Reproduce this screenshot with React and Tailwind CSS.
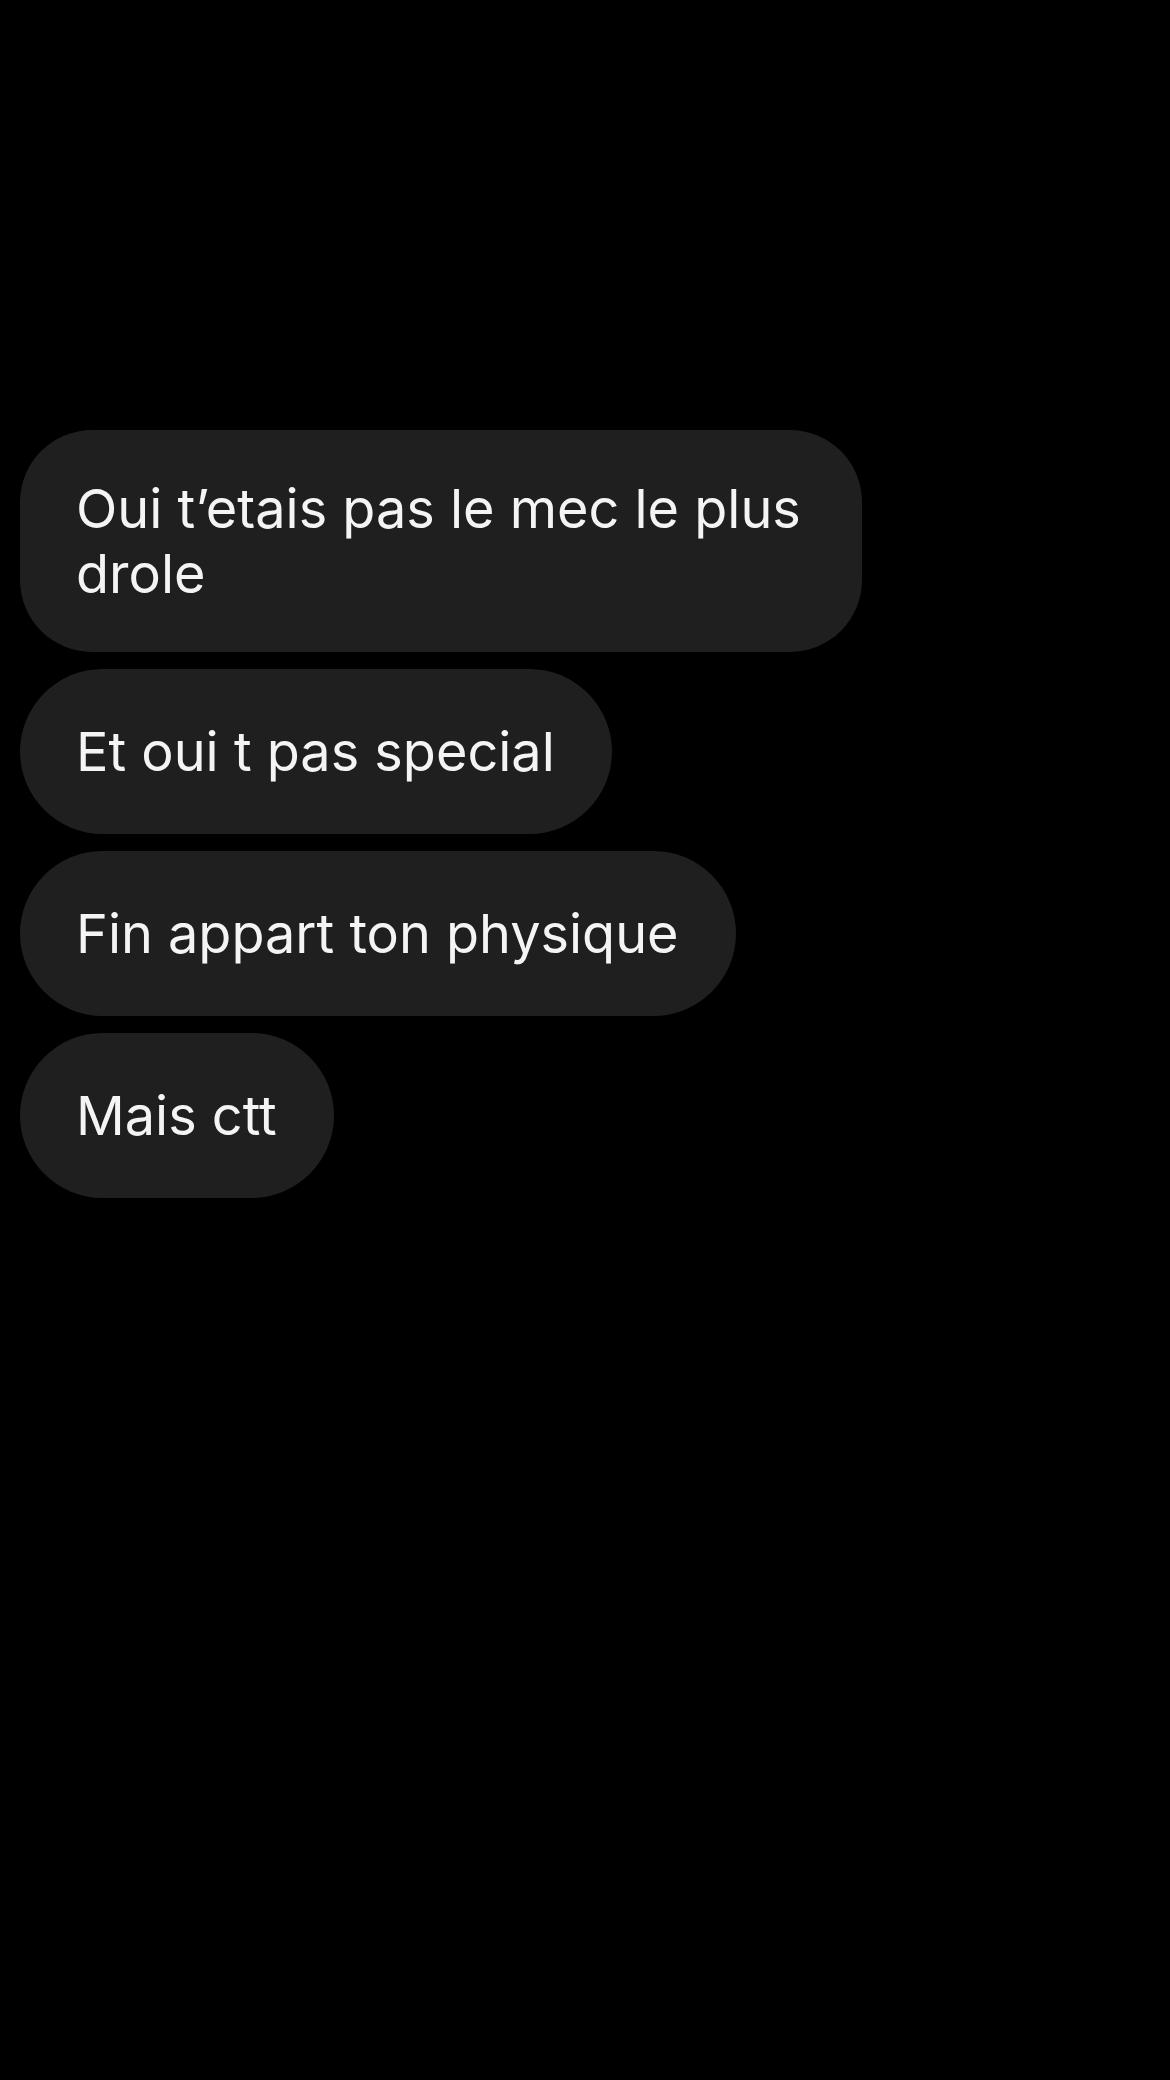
import React from "react";

// message bubbles, all from the other person (left side)
// the two-line bubble has a bit less vertical padding than the single-line pills
const messages = [
  { id: 1, text: "Oui t\u2019etais pas le mec le plus drole", shape: "rounded-[72px] py-[46px]" },
  { id: 2, text: "Et oui t pas special", shape: "rounded-full py-[50px]" },
  { id: 3, text: "Fin appart ton physique", shape: "rounded-full py-[50px]" },
  { id: 4, text: "Mais ctt", shape: "rounded-full py-[50px]" },
];

const App = () => {
  return (
    <div
      className="min-h-[2080px] w-full bg-black pl-[20px] pt-[430px]"
      style={{ fontFamily: "Inter, 'Liberation Sans', sans-serif" }}
    >
      <div className="flex flex-col items-start gap-[17px]">
        {messages.map((m) => (
          <div
            key={m.id}
            className={`max-w-[842px] bg-[#1f1f1f] pl-[56px] pr-[57px] text-[54px] leading-[65px] text-[#f4f4f4] ${m.shape}`}
          >
            {m.text}
          </div>
        ))}
      </div>
    </div>
  );
};

export default App;
